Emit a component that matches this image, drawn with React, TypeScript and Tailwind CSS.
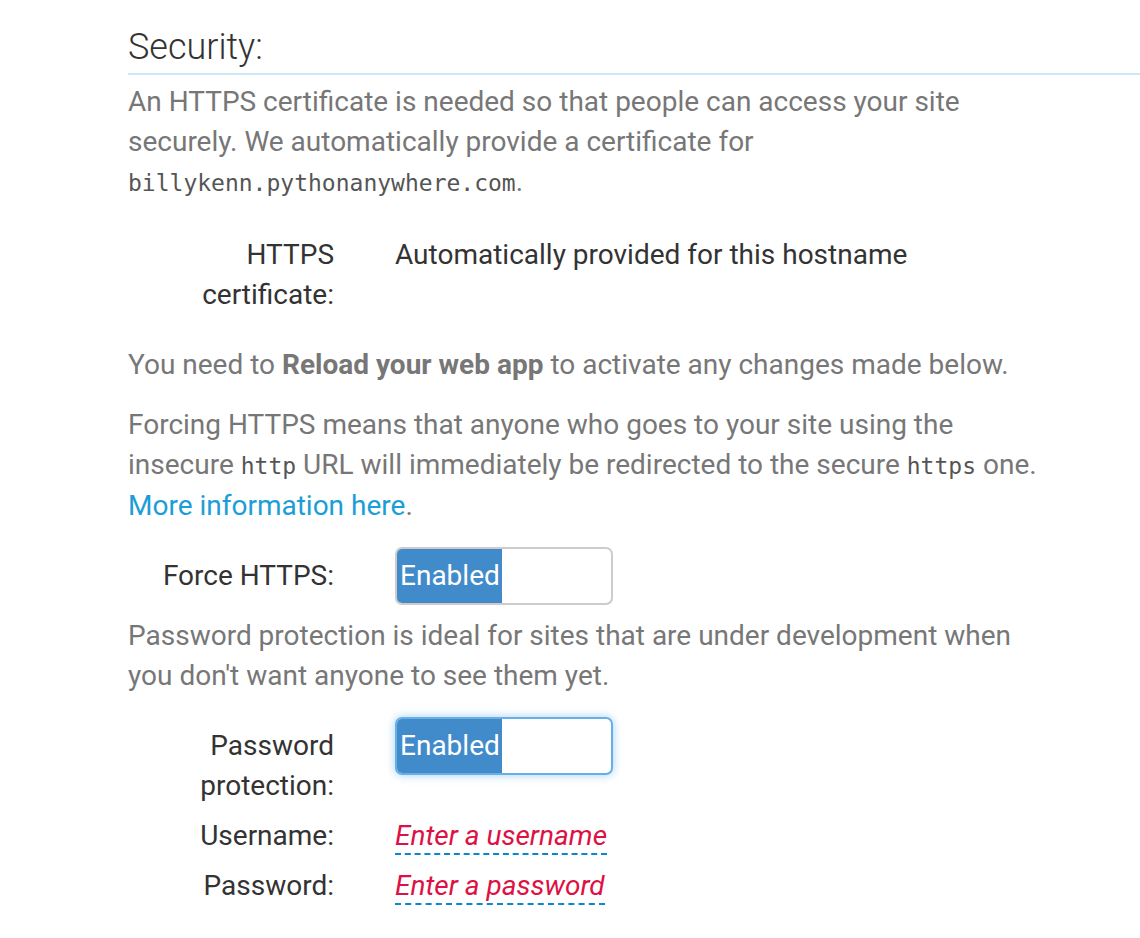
import type { JSX } from "react";

const body = "font-['Roboto',sans-serif]";
const mono = "font-['DejaVu_Sans_Mono',monospace] text-[23px] text-[#555]";

function Toggle({ focused }: { focused?: boolean }): JSX.Element {
  return (
    <div
      className={
        "flex h-[58px] w-[218px] overflow-hidden rounded-[7px] border-2 bg-white " +
        (focused ? "border-[#66afe9] shadow-[0_0_10px_rgba(102,175,233,0.6)]" : "border-[#cccccc]")
      }
    >
      <div className="flex w-[105px] items-center bg-[#428bca] pl-[3px] text-white">Enabled</div>
      <div className="flex-1" />
    </div>
  );
}

function Row({
  label,
  children,
  className = "",
  labelClass = "",
}: {
  label: React.ReactNode;
  children: React.ReactNode;
  className?: string;
  labelClass?: string;
}): JSX.Element {
  return (
    <div className={"flex " + className}>
      <div className={"w-[206px] shrink-0 text-right text-[#333] " + labelClass}>{label}</div>
      <div className="ml-[61px]">{children}</div>
    </div>
  );
}

function Editable({ text }: { text: string }): JSX.Element {
  return (
    <span className="border-b-2 border-dashed border-[#0a88cc] pb-[1px] italic text-[#dd1144]">{text}</span>
  );
}

export default function App(): JSX.Element {
  return (
    <div className={"min-h-[938px] bg-white pl-[128px] text-[28px] leading-[40px] text-[#777] " + body}>
      <h2 className="border-b-2 border-[#c9e9f6] pt-[27px] pb-[6px] text-[36px] font-light leading-[40px] text-[#333]">
        Security:
      </h2>
      <div className="pr-[98px]">
        <p className="mt-[7px]">
          An HTTPS certificate is needed so that people can access your site securely. We automatically provide a
          certificate for <code className={mono}>billykenn.pythonanywhere.com</code>.
        </p>

        <Row label={<>HTTPS<br />certificate:</>} className="mt-[32px]">
          <span className="text-[#333]">Automatically provided for this hostname</span>
        </Row>

        <p className="mt-[30px]">
          You need to <b className="font-bold">Reload your web app</b> to activate any changes made below.
        </p>

        <p className="mt-[20px]">
          Forcing HTTPS means that anyone who goes to your site using the insecure <code className={mono}>http</code>{" "}
          URL will immediately be redirected to the secure <code className={mono}>https</code> one.{" "}
          <a className="text-[#1b9ed8]">More information here</a>.
        </p>

        <Row label="Force HTTPS:" className="mt-[21px] items-center">
          <Toggle />
        </Row>

        <p className="mt-[11px]">
          Password protection is ideal for sites that are under development when you don't want anyone to see them
          yet.
        </p>

        <Row label={<>Password<br />protection:</>} className="mt-[21px]" labelClass="pt-[9px]">
          <Toggle focused />
        </Row>

        <Row label="Username:" className="mt-[10px]">
          <Editable text="Enter a username" />
        </Row>

        <Row label="Password:" className="mt-[10px]">
          <Editable text="Enter a password" />
        </Row>
      </div>
    </div>
  );
}
